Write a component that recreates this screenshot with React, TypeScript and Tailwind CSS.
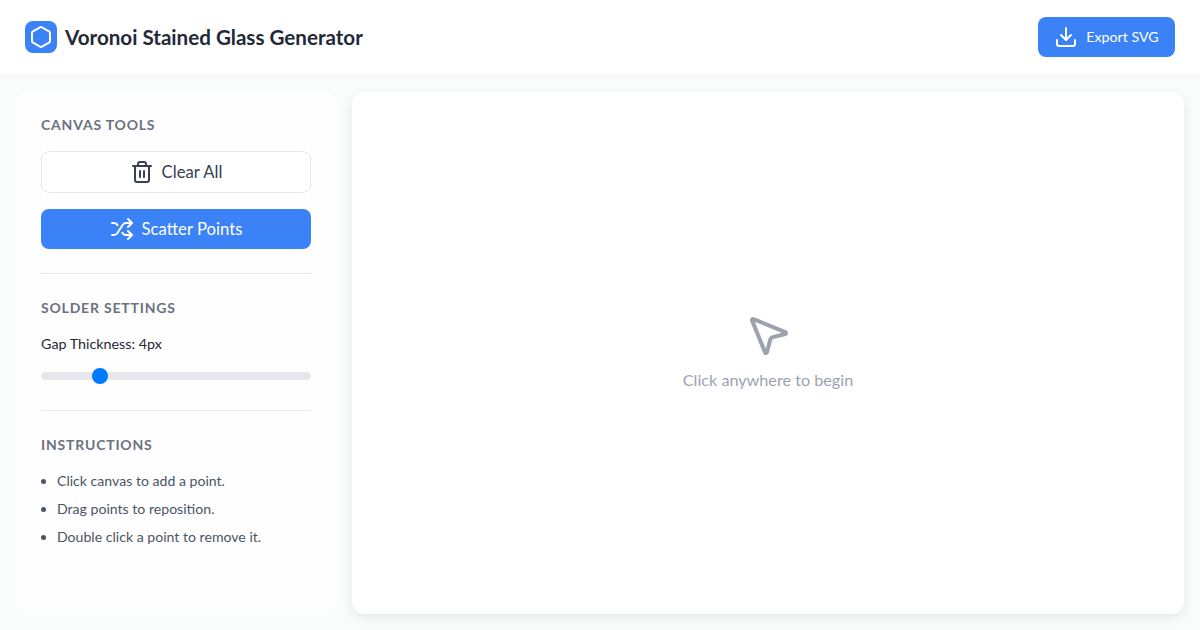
import React, { useState } from "react";
import { Download, Hexagon, MousePointer2, Shuffle, Trash2 } from "lucide-react";

const font = "font-['Lato','Noto_Sans',sans-serif]";

const App = () => {
  const [gap, setGap] = useState(4);

  return (
    <div className={`${font} w-[1200px] h-[630px] overflow-hidden bg-[#fafbfb] flex flex-col`}>
      {/* Header */}
      <header className="h-[74px] shrink-0 bg-white shadow-[0_1px_6px_rgba(0,0,0,0.03)] flex items-center justify-between px-[25px]">
        <div className="flex items-center gap-2">
          <div className="w-8 h-8 rounded-lg bg-[#3b82f6] flex items-center justify-center">
            <Hexagon size={24} className="text-white" strokeWidth={2} />
          </div>
          <h1 className="text-[20.6px] leading-7 font-bold text-[#1f2937] -mt-px">Voronoi Stained Glass Generator</h1>
        </div>
        <button className="h-10 w-[137px] rounded-lg bg-[#3b82f6] text-white text-[14.2px] flex items-center justify-center gap-2">
          <Download size={24} />
          Export SVG
        </button>
      </header>

      <div className="flex gap-[15px] pl-[15px] pr-4 pt-[18px]">
        {/* Sidebar */}
        <aside className="w-[322px] h-[522px] shrink-0 bg-[#fefefe] rounded-xl px-[26px] pt-[23px] shadow-[0_0_6px_#fdfefe]">
          <h2 className="text-sm font-bold tracking-[0.8px] text-[#6b7280] leading-5">CANVAS TOOLS</h2>
          <button className="mt-4 w-full h-[42px] rounded-lg border border-[#e5e7eb] bg-white text-[#374151] text-[16.7px] flex items-center justify-center gap-2">
            <Trash2 size={24} />
            <span className="pt-0.5">Clear All</span>
          </button>
          <button className="mt-4 w-full h-10 rounded-lg bg-[#3b82f6] text-white text-[16.7px] flex items-center justify-center gap-2">
            <Shuffle size={24} />
            <span className="pt-0.5">Scatter Points</span>
          </button>
          <hr className="mt-6 border-[#e5e7eb]" />

          <h2 className="mt-6 text-sm font-bold tracking-[0.8px] text-[#6b7280] leading-5">SOLDER SETTINGS</h2>
          <label className="block mt-4 text-[14.3px] text-[#1f2937] leading-5">Gap Thickness: {gap}px</label>
          <input
            type="range"
            min={2}
            max={12}
            value={gap}
            onChange={(e) => setGap(Number(e.target.value))}
            className="block mt-[18px] w-full h-2 rounded-full bg-[#e5e7eb] appearance-none [&::-webkit-slider-thumb]:appearance-none [&::-webkit-slider-thumb]:w-4 [&::-webkit-slider-thumb]:h-4 [&::-webkit-slider-thumb]:rounded-full [&::-webkit-slider-thumb]:bg-[#007bff]"
          />
          <hr className="mt-[30px] border-[#e5e7eb]" />

          <h2 className="mt-6 text-sm font-bold tracking-[0.8px] text-[#6b7280] leading-5">INSTRUCTIONS</h2>
          <ul className="mt-3 pl-4 list-disc text-[14.1px] text-[#4b5563] leading-7">
            <li>Click canvas to add a point.</li>
            <li>Drag points to reposition.</li>
            <li>Double click a point to remove it.</li>
          </ul>
        </aside>

        {/* Canvas */}
        <main className="w-[832px] h-[522px] bg-white rounded-xl shadow-[0_4px_12px_rgba(0,0,0,0.08)] flex flex-col items-center justify-center">
          <MousePointer2 size={48} strokeWidth={2} className="text-[#9ca3af] -mt-[3px]" />
          <p className="mt-[9px] text-[16.2px] text-[#9ca3af]">Click anywhere to begin</p>
        </main>
      </div>
    </div>
  );
};

export default App;
